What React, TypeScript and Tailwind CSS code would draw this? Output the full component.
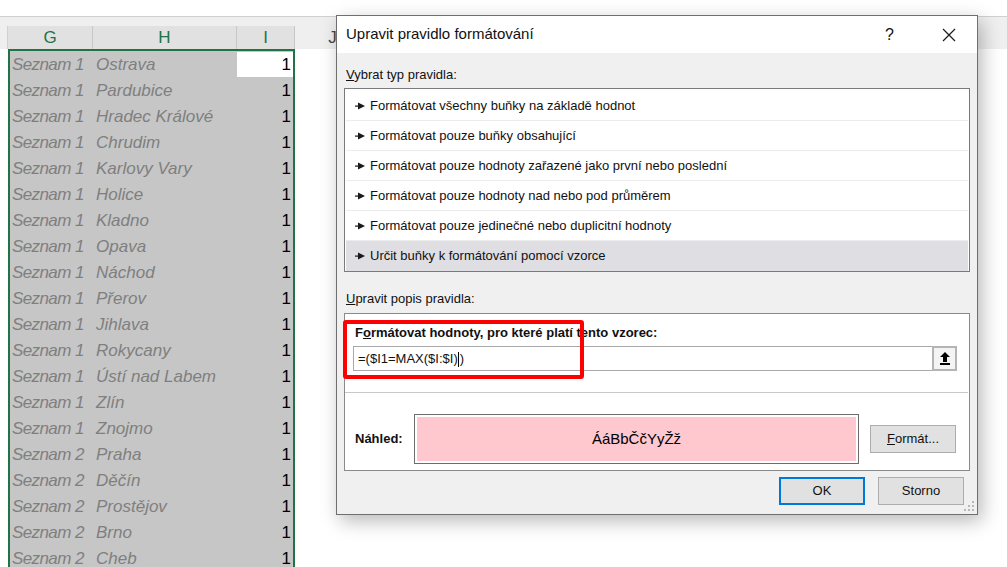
import React from 'react';

const rows: [string, string][] = [
  ['Seznam 1', 'Ostrava'],
  ['Seznam 1', 'Pardubice'],
  ['Seznam 1', 'Hradec Králové'],
  ['Seznam 1', 'Chrudim'],
  ['Seznam 1', 'Karlovy Vary'],
  ['Seznam 1', 'Holice'],
  ['Seznam 1', 'Kladno'],
  ['Seznam 1', 'Opava'],
  ['Seznam 1', 'Náchod'],
  ['Seznam 1', 'Přerov'],
  ['Seznam 1', 'Jihlava'],
  ['Seznam 1', 'Rokycany'],
  ['Seznam 1', 'Ústí nad Labem'],
  ['Seznam 1', 'Zlín'],
  ['Seznam 1', 'Znojmo'],
  ['Seznam 2', 'Praha'],
  ['Seznam 2', 'Děčín'],
  ['Seznam 2', 'Prostějov'],
  ['Seznam 2', 'Brno'],
  ['Seznam 2', 'Cheb'],
];

const ruleTypes = [
  'Formátovat všechny buňky na základě hodnot',
  'Formátovat pouze buňky obsahující',
  'Formátovat pouze hodnoty zařazené jako první nebo poslední',
  'Formátovat pouze hodnoty nad nebo pod průměrem',
  'Formátovat pouze jedinečné nebo duplicitní hodnoty',
  'Určit buňky k formátování pomocí vzorce',
];

function Pointer() {
  return (
    <svg width="10" height="8" viewBox="0 0 10 8" className="shrink-0">
      <rect x="0" y="3.5" width="4" height="1.2" fill="#1a1a1a" />
      <polygon points="3,0.5 10,4 3,7.5" fill="#1a1a1a" />
    </svg>
  );
}

function UploadIcon() {
  return (
    <svg width="12" height="14" viewBox="0 0 12 14">
      <polygon points="6,0 11,5 8,5 8,10 4,10 4,5 1,5" fill="#000" />
      <rect x="1" y="11" width="10" height="2" fill="#000" />
    </svg>
  );
}

function Sheet() {
  return (
    <div className="flex flex-col w-full h-full bg-white font-['Liberation_Sans',sans-serif]">
      {/* horní pruh */}
      <div className="h-[17px] bg-white border-b border-[#d0d0d0] shrink-0" />
      {/* hlavičky sloupců */}
      <div className="flex h-[32px] bg-[#efefef] shrink-0 items-end">
        <div className="w-[8px] h-[23px] border-r border-[#d0d0d0]" />
        <div className="w-[85px] h-[23px] bg-[#e1e1e1] border-r border-[#c8c8c8] flex items-center justify-center text-[17px] text-[#217346]">G</div>
        <div className="w-[144px] h-[23px] bg-[#e1e1e1] border-r border-[#c8c8c8] flex items-center justify-center text-[17px] text-[#217346]">H</div>
        <div className="w-[58px] h-[23px] bg-[#e1e1e1] border-r border-[#c8c8c8] flex items-center justify-center text-[17px] text-[#217346]">I</div>
        <div className="w-[76px] h-[23px] border-r border-[#d0d0d0] flex items-center justify-center text-[17px] text-[#444]">J</div>
        <div className="flex-1" />
      </div>
      {/* buňky */}
      <div className="flex flex-1 min-h-0">
        <div className="w-[8px] shrink-0" />
        <div className="w-[287px] shrink-0 border-2 border-b-0 border-[#217346] bg-[#c6c6c6] flex flex-col">
          {rows.map(([list, city], i) => (
            <div key={i} className="flex h-[26px] shrink-0 items-center text-[17px] pt-[1px]">
              <div className="w-[83px] pl-[2px] italic text-[#7f7f7f] whitespace-nowrap tracking-[-0.6px]">{list}</div>
              <div className="w-[144px] pl-[3px] italic text-[#7f7f7f] whitespace-nowrap">{city}</div>
              <div className={`flex-1 h-full flex items-center justify-end pr-[2px] text-[#000] ${i === 0 ? 'bg-white' : ''}`}>1</div>
            </div>
          ))}
        </div>
        <div className="flex-1" />
      </div>
    </div>
  );
}

function Dialog() {
  return (
    <div className="absolute left-[336px] top-[15px] w-[642px] h-[500px] border border-[#6f6f6f] bg-[#f0f0f0] shadow-[4px_6px_18px_rgba(0,0,0,0.28)] flex flex-col font-['Liberation_Sans',sans-serif] text-[13px] text-[#111]">
      {/* titulek */}
      <div className="h-[37px] bg-white flex items-center pl-[9px] shrink-0">
        <span className="text-[15px] text-[#111]">Upravit pravidlo formátování</span>
        <span className="ml-auto text-[16px] mr-[48px]">?</span>
        <svg width="14" height="14" viewBox="0 0 14 14" className="mr-[21px]">
          <path d="M1 1 L13 13 M13 1 L1 13" stroke="#1a1a1a" strokeWidth="1.2" />
        </svg>
      </div>

      <div className="flex flex-col px-[7px] flex-1">
        <div className="mt-[13px] pl-[2px] h-[18px] leading-[18px]">
          <span className="underline">V</span>ybrat typ pravidla:
        </div>
        <div className="mt-[4px] h-[184px] border border-[#7a7a7a] bg-white flex flex-col pt-[2px] px-[1px]">
          {ruleTypes.map((t, i) => (
            <div
              key={t}
              className={`h-[30px] flex items-center gap-[5px] pl-[9px] ${i === ruleTypes.length - 1 ? 'bg-[#dedee3]' : 'border-b border-[#ececec]'}`}
            >
              <Pointer />
              <span>{t}</span>
            </div>
          ))}
        </div>

        <div className="mt-[18px] pl-[2px] h-[18px] leading-[18px]">
          <span className="underline">U</span>pravit popis pravidla:
        </div>
        <div className="mt-[5px] h-[158px] border border-[#8a8a8a] bg-white flex flex-col">
          <div className="mt-[10px] pl-[10px] font-bold h-[18px] leading-[18px]">
            F<span className="underline">o</span>rmátovat hodnoty, pro které platí tento vzorec:
          </div>
          <div className="mt-[4px] ml-[8px] w-[604px] h-[25px] border border-[#a8a8a8] flex items-center">
            <span className="pl-[4px] flex-1">=($I1=MAX($I:$I)<span className="inline-block w-px h-[15px] bg-black align-middle mx-[0.5px]" />)</span>
            <div className="w-[25px] h-[25px] -mr-px -mt-px -mb-px border-2 border-[#b4b4b4] bg-[#f4f4f4] flex items-center justify-center">
              <UploadIcon />
            </div>
          </div>
          <div className="mt-[21px] border-t border-[#c8c8c8] mr-[1px]" />
          <div className="flex items-center mt-[21px]">
            <div className="w-[69px] pl-[10px] font-bold">Náhled:</div>
            <div className="w-[445px] h-[50px] border border-[#6d6d6d] p-[2px] bg-white">
              <div className="w-full h-full bg-[#ffc7ce] flex items-center justify-center text-[15px] text-[#000]">ÁáBbČčYyŽž</div>
            </div>
            <button className="ml-[11px] w-[86px] h-[28px] bg-[#e1e1e1] border border-[#adadad] flex items-center justify-center">
              <span className="underline">F</span>ormát...
            </button>
          </div>
        </div>

        <div className="flex justify-end gap-[13px] mt-[6px] pr-[6px]">
          <button className="w-[86px] h-[28px] bg-[#e1e1e1] border-2 border-[#0078d7] flex items-center justify-center">OK</button>
          <button className="w-[86px] h-[28px] bg-[#e1e1e1] border border-[#adadad] flex items-center justify-center">Storno</button>
        </div>
      </div>
      {/* úchyt pro změnu velikosti */}
      <svg width="12" height="12" viewBox="0 0 12 12" className="absolute right-[1px] bottom-[1px]">
        <rect x="8" y="0" width="2" height="2" fill="#b8b8b8" />
        <rect x="4" y="4" width="2" height="2" fill="#b8b8b8" />
        <rect x="8" y="4" width="2" height="2" fill="#b8b8b8" />
        <rect x="0" y="8" width="2" height="2" fill="#b8b8b8" />
        <rect x="4" y="8" width="2" height="2" fill="#b8b8b8" />
        <rect x="8" y="8" width="2" height="2" fill="#b8b8b8" />
      </svg>
    </div>
  );
}

export default function App() {
  return (
    <div className="relative w-[1007px] h-[567px] overflow-hidden bg-white">
      <Sheet />
      <Dialog />
      {/* červené zvýraznění */}
      <div className="absolute left-[343px] top-[320px] w-[241px] h-[59px] border-[4px] border-[#ff0000] rounded-[3px]" />
    </div>
  );
}
